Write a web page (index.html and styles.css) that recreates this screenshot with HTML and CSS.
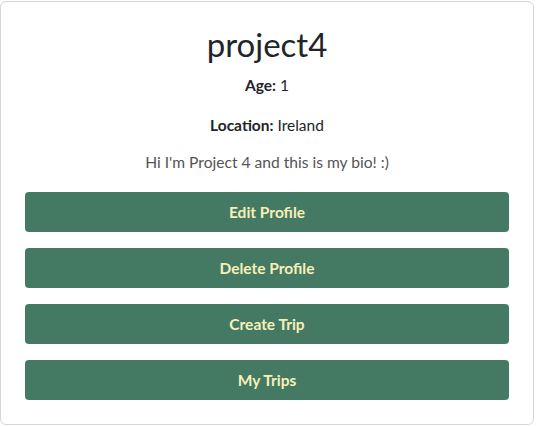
FILE: index.html
```html
<!DOCTYPE html>
<html>
<head>
<meta charset="utf-8">
<link rel="stylesheet" href="styles.css">
</head>
<body>
<div class="card">
  <h1 class="name">project4</h1>
  <p class="field"><strong>Age:</strong> 1</p>
  <p class="field"><strong>Location:</strong> Ireland</p>
  <p class="bio">Hi I'm Project 4 and this is my bio! :)</p>
  <div class="actions">
    <button class="btn">Edit Profile</button>
    <button class="btn">Delete Profile</button>
    <button class="btn">Create Trip</button>
    <button class="btn">My Trips</button>
  </div>
</div>
</body>
</html>
```
FILE: styles.css
```css
html, body {
  margin: 0;
  padding: 0;
  background: #fff;
}
body {
  font-family: Lato, "Liberation Sans", sans-serif;
  color: #212529;
  padding-top: 1px;
}
.card {
  width: 534px;
  box-sizing: border-box;
  height: 424px;
  border: 1px solid #d6d6d6;
  border-radius: 6px;
  padding: 23px 24px 24px;
  display: flex;
  flex-direction: column;
  align-items: center;
}
.name {
  margin: 0;
  font-size: 33px;
  font-weight: 400;
  line-height: 38px;
}
.field {
  margin: 11px 0 0;
  font-size: 15.5px;
  line-height: 22px;
}
.field + .field {
  margin-top: 18px;
}
.field strong {
  font-weight: 700;
}
.bio {
  margin: 15px 0 0;
  font-size: 15.6px;
  line-height: 22px;
  color: #555;
}
.actions {
  align-self: stretch;
  margin-top: 19px;
  display: flex;
  flex-direction: column;
  gap: 16px;
}
.btn {
  height: 40px;
  border: none;
  border-radius: 4px;
  background: #447a63;
  color: #f7efb8;
  font-family: Lato, "Liberation Sans", sans-serif;
  font-weight: 700;
  font-size: 15.5px;
  padding: 0;
}
```
